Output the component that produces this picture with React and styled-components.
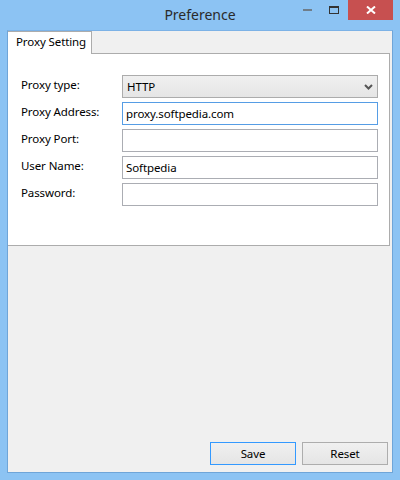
import React from 'react';
import styled, { createGlobalStyle } from 'styled-components';

const Global = createGlobalStyle`
  html, body {
    margin: 0;
    padding: 0;
    background: #8cc3f3;
  }
  * {
    box-sizing: border-box;
  }
`;

const Frame = styled.div`
  width: 400px;
  height: 480px;
  background: #8cc3f3;
  display: flex;
  flex-direction: column;
  font-family: 'Noto Sans', 'Open Sans', sans-serif;
  font-size: 11.5px;
  letter-spacing: -0.1px;
  color: #000;
`;

const TitleBar = styled.div`
  height: 30px;
  display: grid;
  grid-template-columns: 105px 1fr 105px;
  align-items: start;
`;

const Title = styled.div`
  grid-column: 2;
  text-align: center;
  font-size: 14px;
  letter-spacing: 0;
  line-height: 30px;
  color: #2a2a2a;
`;

const Controls = styled.div`
  grid-column: 3;
  display: flex;
  align-items: flex-start;
  padding-right: 7px;
`;

const CtrlButton = styled.div`
  flex: 0 0 ${(p) => p.$w}px;
  height: 20px;
  display: flex;
  align-items: center;
  justify-content: center;
  background: ${(p) => (p.$close ? '#c75050' : 'transparent')};
`;

const Client = styled.div`
  flex: 1;
  margin: 0 7px 7px 7px;
  border: 1px solid #6fa5d8;
  border-top-color: #7cb2e6;
  background: #f0f0f0;
  display: flex;
  flex-direction: column;
`;

const TabStrip = styled.div`
  display: flex;
  height: 22px;
`;

const Tab = styled.div`
  width: 84px;
  height: 23px;
  background: #fff;
  border: 1px solid #acacac;
  border-bottom: none;
  border-left: none;
  padding-left: 8px;
  line-height: 20px;
  position: relative;
  z-index: 1;
`;

const Panel = styled.div`
  width: 382px;
  height: 193px;
  background: #fff;
  border: 1px solid #acacac;
  border-left: none;
  padding: 21px 10px 0 13px;
  display: flex;
  flex-direction: column;
  gap: 4px;
`;

const Row = styled.div`
  display: flex;
  align-items: flex-start;
  height: 23px;
`;

const Label = styled.div`
  width: 101px;
  padding-top: 1px;
  line-height: 17px;
`;

const Field = styled.div`
  width: 256px;
  height: 23px;
  border: 1px solid ${(p) => (p.$focus ? '#569de5' : '#abadb3')};
  background: #fff;
  padding-left: 3px;
  line-height: 21px;
`;

const Combo = styled(Field)`
  background: linear-gradient(#f0f0f0, #e5e5e5);
  border-color: #acacac;
  display: flex;
  align-items: center;
  justify-content: space-between;
  padding-left: 4px;
  padding-right: 4px;
`;

const Footer = styled.div`
  flex: 1;
  display: flex;
  justify-content: flex-end;
  align-items: flex-end;
  gap: 6px;
  padding: 0 4px 7px 0;
`;

const Button = styled.div`
  width: 86px;
  height: 23px;
  border: 1px solid ${(p) => (p.$default ? '#3399ff' : '#adadad')};
  background: linear-gradient(#f0f0f0, #e5e5e5);
  display: flex;
  align-items: center;
  justify-content: center;
`;

export default function App() {
  return (
    <>
      <Global />
      <Frame>
        <TitleBar>
          <Title>Preference</Title>
          <Controls>
            <CtrlButton $w={26}>
              <svg width="10" height="4" viewBox="0 0 10 4">
                <rect x="0" y="1" width="9" height="2" fill="#6f7d8a" />
              </svg>
            </CtrlButton>
            <CtrlButton $w={27}>
              <svg width="11" height="9" viewBox="0 0 11 9">
                <rect x="0.5" y="0.5" width="9" height="7" fill="none" stroke="#333" />
                <rect x="0" y="0" width="10" height="2" fill="#333" />
              </svg>
            </CtrlButton>
            <CtrlButton $w={45} $close>
              <svg width="10" height="8" viewBox="0 0 10 8">
                <path d="M1 0.5 L9 7.5 M9 0.5 L1 7.5" stroke="#fff" strokeWidth="2" />
              </svg>
            </CtrlButton>
          </Controls>
        </TitleBar>
        <Client>
          <TabStrip>
            <Tab>Proxy Setting</Tab>
          </TabStrip>
          <Panel>
            <Row>
              <Label>Proxy type:</Label>
              <Combo>
                <span>HTTP</span>
                <svg width="9" height="6" viewBox="0 0 9 6">
                  <path d="M1 1 L4.5 4.5 L8 1" fill="none" stroke="#555" strokeWidth="2" />
                </svg>
              </Combo>
            </Row>
            <Row>
              <Label>Proxy Address:</Label>
              <Field $focus>proxy.softpedia.com</Field>
            </Row>
            <Row>
              <Label>Proxy Port:</Label>
              <Field />
            </Row>
            <Row>
              <Label>User Name:</Label>
              <Field>Softpedia</Field>
            </Row>
            <Row>
              <Label>Password:</Label>
              <Field />
            </Row>
          </Panel>
          <Footer>
            <Button $default>Save</Button>
            <Button>Reset</Button>
          </Footer>
        </Client>
      </Frame>
    </>
  );
}
